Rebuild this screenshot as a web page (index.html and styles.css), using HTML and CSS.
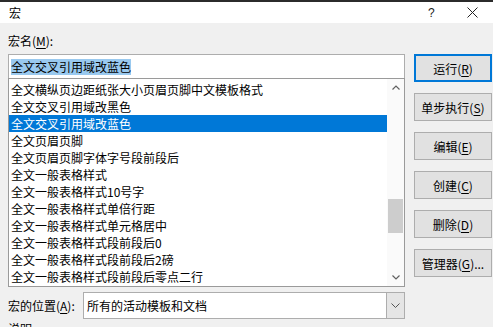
FILE: index.html
```html
<!DOCTYPE html>
<html lang="zh-CN">
<head>
    <meta charset="UTF-8">
    <title>宏</title>
    <link rel="stylesheet" href="styles.css">
</head>
<body>
    <div class="dialog">
        <div class="titlebar">
            <span class="title">宏</span>
            <span class="help">?</span>
            <span class="close">
                <svg width="11" height="11" viewBox="0 0 11 11"><path d="M0.5 0.5L10.5 10.5M10.5 0.5L0.5 10.5" stroke="#222" stroke-width="1" fill="none"/></svg>
            </span>
        </div>
        <div class="content">
            <div class="main">
                <div class="left">
                    <div class="label">宏名(<u>M</u>):</div>
                    <div class="name-input"><span class="sel">全文交叉引用域改蓝色</span></div>
                    <div class="listbox">
                        <ul class="items">
                            <li>全文横纵页边距纸张大小页眉页脚中文模板格式</li>
                            <li>全文交叉引用域改黑色</li>
                            <li class="active">全文交叉引用域改蓝色</li>
                            <li>全文页眉页脚</li>
                            <li>全文页眉页脚字体字号段前段后</li>
                            <li>全文一般表格样式</li>
                            <li>全文一般表格样式10号字</li>
                            <li>全文一般表格样式单倍行距</li>
                            <li>全文一般表格样式单元格居中</li>
                            <li>全文一般表格样式段前段后0</li>
                            <li>全文一般表格样式段前段后2磅</li>
                            <li>全文一般表格样式段前段后零点二行</li>
                        </ul>
                        <div class="scrollbar">
                            <div class="arrow">
                                <svg width="8" height="5" viewBox="0 0 8 5"><path d="M0.5 4.5L4 1L7.5 4.5" stroke="#606060" stroke-width="1.2" fill="none"/></svg>
                            </div>
                            <div class="track"><div class="thumb"></div></div>
                            <div class="arrow">
                                <svg width="8" height="5" viewBox="0 0 8 5"><path d="M0.5 0.5L4 4L7.5 0.5" stroke="#606060" stroke-width="1.2" fill="none"/></svg>
                            </div>
                        </div>
                    </div>
                    <div class="location">
                        <span class="loc-label">宏的位置(<u>A</u>):</span>
                        <div class="combo">
                            <span class="combo-text">所有的活动模板和文档</span>
                            <span class="drop">
                                <svg width="9" height="5" viewBox="0 0 9 5"><path d="M0.5 0.5L4.5 4.5L8.5 0.5" stroke="#555" stroke-width="1" fill="none"/></svg>
                            </span>
                        </div>
                    </div>
                </div>
                <div class="buttons">
                    <div class="btn default">运行(<u>R</u>)</div>
                    <div class="btn">单步执行(<u>S</u>)</div>
                    <div class="btn">编辑(<u>E</u>)</div>
                    <div class="btn">创建(<u>C</u>)</div>
                    <div class="btn">删除(<u>D</u>)</div>
                    <div class="btn">管理器(<u>G</u>)...</div>
                </div>
            </div>
            <div class="desc">说明:</div>
        </div>
    </div>
</body>
</html>
```

FILE: styles.css
```css
html,
body {
    margin: 0;
    padding: 0;
    overflow: hidden;
}

body {
    font-family: "Noto Sans CJK SC", "Noto Sans", sans-serif;
    font-size: 12px;
    color: #000;
    background: #f0f0f0;
}

ul,
li {
    margin: 0;
    padding: 0;
    list-style: none;
}

u {
    text-decoration-thickness: 1px;
    text-underline-offset: 2px;
}

.dialog {
    width: 493px;
    height: 327px;
    display: flex;
    flex-direction: column;
    overflow: hidden;
}

.titlebar {
    flex-shrink: 0;
    height: 21px;
    border-top: 2px solid #2b2b2b;
    background: #fff;
    display: flex;
    align-items: center;
    line-height: 16px;
}

.title {
    margin-left: 9px;
    flex: 1;
}

.help {
    width: 8px;
    margin-right: 31px;
    font-family: "Liberation Sans", sans-serif;
    font-size: 12px;
    color: #222;
}

.close {
    width: 11px;
    height: 11px;
    margin-right: 15px;
    display: flex;
}

.content {
    flex-shrink: 0;
    padding: 0 1px 0 8px;
    background: #f0f0f0;
}

.main {
    display: flex;
}

.left {
    width: 397px;
    padding-top: 10px;
}

.label {
    line-height: 16px;
    margin-bottom: 5px;
}

.name-input {
    box-sizing: border-box;
    height: 25px;
    border: 1px solid #adadad;
    background: #fff;
    padding-left: 2px;
    display: flex;
    align-items: center;
}

.sel {
    background: #99c9ef;
    line-height: 16px;
}

.listbox {
    box-sizing: border-box;
    height: 209px;
    margin-top: -1px;
    border: 1px solid #9a9a9a;
    background: #fff;
    display: flex;
}

.items {
    flex: 1;
    padding-top: 2px;
}

.items li {
    height: 17px;
    line-height: 17px;
    padding-left: 2px;
    white-space: nowrap;
    overflow: hidden;
}

.items li.active {
    background: #0078d7;
    color: #fff;
}

.scrollbar {
    width: 17px;
    background: #fafafa;
    display: flex;
    flex-direction: column;
}

.arrow {
    height: 17px;
    display: flex;
    align-items: center;
    justify-content: center;
}

.track {
    flex: 1;
    padding-top: 103px;
}

.thumb {
    width: 15px;
    height: 34px;
    margin-left: 1px;
    background: #cdcdcd;
}

.location {
    margin-top: 5px;
    height: 27px;
    display: flex;
    align-items: center;
}

.loc-label {
    width: 75px;
}

.combo {
    box-sizing: border-box;
    flex: 1;
    height: 27px;
    border: 1px solid #adadad;
    background: #fff;
    display: flex;
    align-items: stretch;
}

.combo-text {
    flex: 1;
    padding-left: 3px;
    line-height: 25px;
}

.drop {
    width: 17px;
    border-left: 1px solid #adadad;
    background: #e5e5e5;
    display: flex;
    align-items: center;
    justify-content: center;
}

.buttons {
    width: 78px;
    margin-left: 9px;
    padding-top: 31px;
}

.btn {
    box-sizing: border-box;
    height: 28px;
    margin-bottom: 11px;
    border: 1px solid #adadad;
    background: #e1e1e1;
    display: flex;
    align-items: center;
    justify-content: center;
    white-space: nowrap;
}

.btn.default {
    border: 2px solid #0078d7;
}

.desc {
    margin-top: 2px;
    line-height: 16px;
}
```
